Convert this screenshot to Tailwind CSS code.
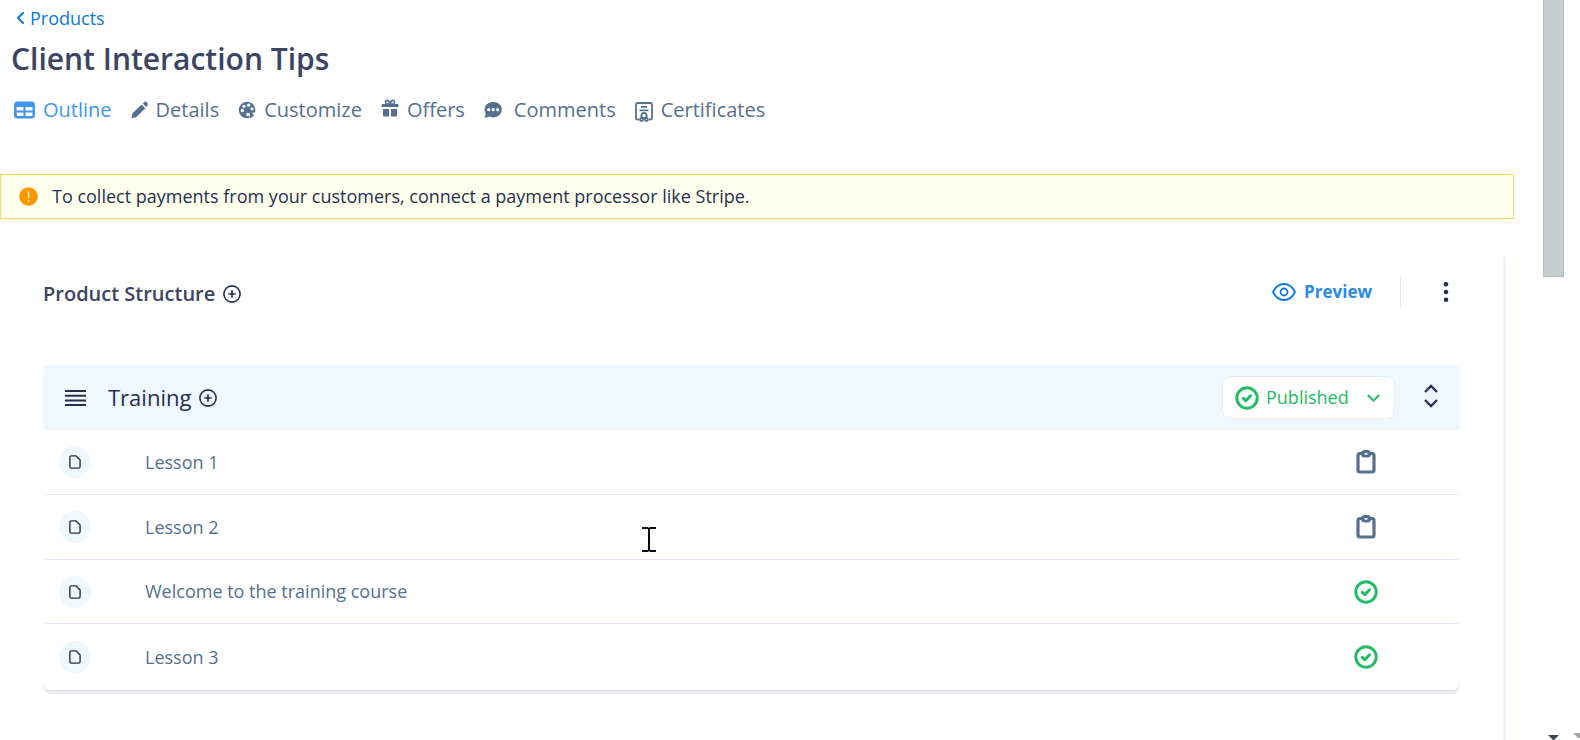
<!DOCTYPE html>
<html lang="en">
<head>
<meta charset="utf-8">
<meta name="viewport" content="width=device-width, initial-scale=1">
<title>Client Interaction Tips</title>
<script src="https://cdn.jsdelivr.net/npm/@tailwindcss/browser@4"></script>
</head>
<body class="relative flex h-screen overflow-hidden bg-white font-['Open_Sans','Noto_Sans',sans-serif] text-[#26304f]">

<!-- shared symbols -->
<svg class="hidden" aria-hidden="true">
  <symbol id="plus-circle" viewBox="0 0 18 18"><circle cx="9" cy="9" r="8.1" fill="none" stroke="currentColor" stroke-width="1.6"/><path d="M9 6v6M6 9h6" fill="none" stroke="currentColor" stroke-width="1.7" stroke-linecap="round"/></symbol>
  <symbol id="check-circle" viewBox="0 0 24 24"><circle cx="12" cy="12" r="10.200" fill="none" stroke="currentColor" stroke-width="3"/><path d="M8.200 12.400l2.600 2.300 4.700-4.900" fill="none" stroke="currentColor" stroke-width="3" stroke-linecap="round" stroke-linejoin="round"/></symbol>
  <symbol id="page" viewBox="0 0 12 14"><path d="M2.200.9h4.900l4 4v6.600a1.600 1.600 0 0 1-1.600 1.600H2.200A1.300 1.300 0 0 1 .9 11.800V2.200A1.300 1.300 0 0 1 2.200.9z" fill="none" stroke="currentColor" stroke-width="1.400" stroke-linejoin="round"/></symbol>
  <symbol id="clipboard" viewBox="0 0 20 24"><rect x="2" y="3.500" width="16" height="18.500" rx="2" fill="none" stroke="currentColor" stroke-width="3.200"/><rect x="5" y="0" width="10" height="7.500" rx="3.500" fill="currentColor"/><ellipse cx="10" cy="3.800" rx="1.800" ry="0.900" fill="#fff"/></symbol>
</svg>

<main class="flex min-w-0 flex-1 flex-col">
  <header class="px-[11px] pt-1">
    <a href="#" class="flex w-fit items-center gap-1 pl-1 text-[18px] leading-7 text-[#0b79e0]">
      <svg class="h-3 w-[11px]" viewBox="0 0 11 12" fill="none" stroke="currentColor" stroke-width="2" stroke-linecap="round" stroke-linejoin="round"><path d="M8 1L3 6l5 5"/></svg>Products</a>
    <h1 class="mt-1 text-[30px] font-semibold leading-[46px] text-[#3b4462]">Client Interaction Tips</h1>
    <nav class="mt-[10px] flex items-center gap-[19px] text-[20px] leading-9 text-[#55708c]">
      <a href="#" class="flex items-center gap-2 pl-[3px] text-[#3f97ee]">
        <svg class="h-[18px] w-[21px]" viewBox="0 0 21 18"><rect width="21" height="17" y=".5" rx="3.500" fill="currentColor"/><path d="M2.500 6h7v3.500h-7zM11.500 6h7v3.500h-7zM2.500 11.500h7V15h-6.500zM11.500 11.500h7V15h-7z" fill="#fff"/></svg>Outline</a>
      <a href="#" class="flex items-center gap-2">
        <svg class="h-[18px] w-[17px]" viewBox="0 0 17 18" fill="currentColor"><path d="M.5 17.300l.8-4.800L10.600 3.600l3.700 3.700-9.200 9zM11.700 2.600l1.400-1.400a1.900 1.900 0 0 1 2.700 0l.5.500a1.900 1.900 0 0 1 0 2.700L15.200 6z"/></svg>Details</a>
      <a href="#" class="flex items-center gap-2">
        <svg class="h-[18px] w-[18px]" viewBox="0 0 18 18"><path d="M9 .8a8.200 8.200 0 1 0 1.200 16.300c1.500-.3 1.300-1.600.9-2.500-.5-1.500.3-2.800 2-2.800h2.300c1.300 0 2-.8 2-2.500C17.200 4.500 13.700.8 9 .8z" fill="currentColor"/><path d="M12 11.500c2 0 3 1 4 2.500-1 1.700-2.500 2.700-4.500 3.200z" fill="currentColor"/><g fill="#fff"><circle cx="4.400" cy="9.500" r="1.700"/><circle cx="6" cy="5.300" r="1.600"/><circle cx="10.600" cy="4.200" r="1.600"/><circle cx="14" cy="7.800" r="1.600"/><circle cx="9.800" cy="13.500" r="1.700"/></g></svg>Customize</a>
      <a href="#" class="flex items-center gap-2">
        <svg class="mb-1 h-[18px] w-[18px]" viewBox="0 0 18 18"><path d="M1.500 5h15a1 1 0 0 1 1 1v2H.5V6a1 1 0 0 1 1-1zM2 10h6v7.500H3a1 1 0 0 1-1-1zM10 10h6v6.500a1 1 0 0 1-1 1h-5z" fill="currentColor"/><path d="M9 5.500C5.500 5.500 4.200 4 4.500 2.500 5 .6 8 .5 9 5.500c1-5 4-4.900 4.500-3C13.800 4 12.500 5.500 9 5.500z" fill="#fff" stroke="currentColor" stroke-width="1.700"/></svg>Offers</a>
      <a href="#" class="flex items-center gap-3">
        <svg class="h-[18px] w-[18px]" viewBox="0 0 18 18"><path d="M9.200 1C4.200 1 .6 4.300.6 8.600c0 1.800.6 3.300 1.400 4.500L.3 16.500c2 .2 3.600-.2 4.900-.9 1.200.5 2.600.8 4 .8 5 0 8.600-3.300 8.600-7.800S14.200 1 9.200 1z" fill="currentColor"/><g fill="#fff"><circle cx="4.700" cy="8.700" r="1.600"/><circle cx="9.200" cy="8.700" r="1.600"/><circle cx="13.700" cy="8.700" r="1.600"/></g></svg>Comments</a>
      <a href="#" class="flex items-center gap-2">
        <svg class="mt-1 h-5 w-[18px]" viewBox="0 0 18 20" fill="none" stroke="currentColor" stroke-width="1.800"><path d="M4 17.500H2.500A1.500 1.500 0 0 1 1 16V2.500A1.500 1.500 0 0 1 2.500 1h13A1.500 1.500 0 0 1 17 2.500V16a1.500 1.500 0 0 1-1.500 1.500H14M6 4.800h6M4.500 8.300h9"/><circle cx="9" cy="13.500" r="2.600"/><circle cx="6.600" cy="17.500" r="1.500"/><circle cx="11.400" cy="17.500" r="1.500"/></svg>Certificates</a>
    </nav>
  </header>

  <div role="alert" class="mt-[46px] flex h-[45px] items-center gap-[14px] border border-[#fcd468] bg-[#ffffed] pl-[18px] text-[18px]">
    <svg class="h-[19px] w-[19px] shrink-0" viewBox="0 0 19 19"><circle cx="9.500" cy="9.500" r="9.300" fill="#fb9800"/><path d="M9.500 4.500v6.300M9.500 13v1.600" stroke="#fff3c4" stroke-width="1.500"/></svg>
    <p>To collect payments from your customers, connect a payment processor like Stripe.</p>
  </div>

  <section class="mr-2 mt-9 flex-1 rounded-tr-sm border-r-3 border-[#ebf4fe] pl-[43px] pr-[43px]">
    <div class="flex h-[74px] items-center">
      <div class="flex items-center gap-2 pt-[3px]">
        <h2 class="text-[20px] font-semibold text-[#3b4462]">Product Structure</h2>
        <button type="button" aria-label="Add section"><svg class="h-[18px] w-[18px]"><use href="#plus-circle"/></svg></button>
      </div>
      <a href="#" class="ml-auto flex items-center gap-2 text-[17px] font-bold text-[#2b8ae6]">
        <svg class="h-[18px] w-6" viewBox="0 0 24 18" fill="none" stroke="#0b79e0" stroke-width="1.800"><path d="M1 9C3.500 3.800 7.300 1 12 1s8.500 2.800 11 8c-2.500 5.200-6.300 8-11 8S3.500 14.200 1 9z" stroke-linejoin="round"/><circle cx="12" cy="9" r="3.500"/></svg>Preview</a>
      <span class="ml-7 h-[30px] w-px bg-[#d3e5f8]"></span>
      <button type="button" aria-label="More actions" class="ml-[42px] mr-[11px]"><svg class="h-5 w-[6px]" viewBox="0 0 6 20" fill="#26304f"><circle cx="3" cy="2.300" r="2.300"/><circle cx="3" cy="10" r="2.300"/><circle cx="3" cy="17.700" r="2.300"/></svg></button>
    </div>

    <div class="mt-9 rounded-lg border-b border-[#dcdcec] shadow-[0_3px_0_#ededee]">
      <div class="flex h-[65px] items-center rounded-t-md bg-[#eff7ff] pl-[22px]">
        <button type="button" aria-label="Reorder module"><svg class="h-[18px] w-[21px]" viewBox="0 0 21 18" stroke="#26304f" stroke-width="2"><path d="M0 2h21M0 6.700h21M0 11.400h21M0 16h21"/></svg></button>
        <h3 class="ml-[22px] text-[22px]">Training</h3>
        <button type="button" aria-label="Add lesson" class="ml-2"><svg class="h-[18px] w-[18px]"><use href="#plus-circle"/></svg></button>
        <label class="ml-auto flex h-[43px] w-[173px] items-center rounded-lg border border-[#e3eefc] bg-white pl-3 text-[#23bb64]">
          <svg class="h-6 w-6 shrink-0"><use href="#check-circle"/></svg>
          <select aria-label="Module status" class="ml-[7px] min-w-0 flex-1 appearance-none bg-transparent text-[18px] outline-none"><option>Published</option><option>Draft</option></select>
          <svg class="pointer-events-none mr-[14px] h-2 w-[13px] shrink-0" viewBox="0 0 13 8" fill="none" stroke="currentColor" stroke-width="2"><path d="M.7 1l5.800 5.600L12.300 1"/></svg>
        </label>
        <button type="button" aria-label="Collapse module" class="mb-1 ml-[29px] mr-[22px]"><svg class="h-6 w-[14px]" viewBox="0 0 14 24" fill="none" stroke="#26304f" stroke-width="2.300"><path d="M1 8l6-6 6 6M1 16l6 6 6-6"/></svg></button>
      </div>
      <ul class="text-[18px] text-[#55708c]">
        <li class="flex h-[65px] items-center border-b border-[#e3edf9] pl-4"><span class="flex size-8 items-center justify-center rounded-full bg-[#eff7ff] text-[#26304f]"><svg class="h-[14px] w-3"><use href="#page"/></svg></span><a href="#" class="ml-[54px]">Lesson 1</a><svg class="ml-auto mr-[84px] h-6 w-5" role="img" aria-label="Draft"><use href="#clipboard"/></svg></li>
        <li class="flex h-[65px] items-center border-b border-[#e3edf9] pl-4"><span class="flex size-8 items-center justify-center rounded-full bg-[#eff7ff] text-[#26304f]"><svg class="h-[14px] w-3"><use href="#page"/></svg></span><a href="#" class="ml-[54px]">Lesson 2</a><svg class="ml-auto mr-[84px] h-6 w-5" role="img" aria-label="Draft"><use href="#clipboard"/></svg></li>
        <li class="flex h-16 items-center border-b border-[#e3edf9] pl-4"><span class="flex size-8 items-center justify-center rounded-full bg-[#eff7ff] text-[#26304f]"><svg class="h-[14px] w-3"><use href="#page"/></svg></span><a href="#" class="ml-[54px]">Welcome to the training course</a><svg class="ml-auto mr-[82px] h-6 w-6 text-[#23bb64]" role="img" aria-label="Published"><use href="#check-circle"/></svg></li>
        <li class="flex h-[66px] items-center pl-4"><span class="flex size-8 items-center justify-center rounded-full bg-[#eff7ff] text-[#26304f]"><svg class="h-[14px] w-3"><use href="#page"/></svg></span><a href="#" class="ml-[54px]">Lesson 3</a><svg class="ml-auto mr-[82px] h-6 w-6 text-[#23bb64]" role="img" aria-label="Published"><use href="#check-circle"/></svg></li>
      </ul>
    </div>
  </section>
</main>

<!-- scrollbar -->
<aside class="ml-[29px] flex w-[37px] shrink-0 flex-col justify-between" aria-hidden="true">
  <div class="h-[277px] w-[21px] border border-t-0 border-[#b3bdbd] bg-[#c5cdce]"></div>
  <svg class="h-2 w-[37px]" viewBox="0 0 37 8"><path d="M5 3h11l-5 5h-1z" fill="#3a4152"/><path d="M30 1h7v5h-2z" fill="#a4a6aa"/></svg>
</aside>

<!-- text cursor -->
<svg class="pointer-events-none absolute left-[642px] top-[527px] h-[25px] w-[14px]" viewBox="0 0 14 25" fill="#050510" aria-hidden="true"><path d="M0 0h6l1 1 1-1h6v2H8v21h6v2H8l-1-1-1 1H0v-2h6V2H0z"/></svg>
</body>
</html>
